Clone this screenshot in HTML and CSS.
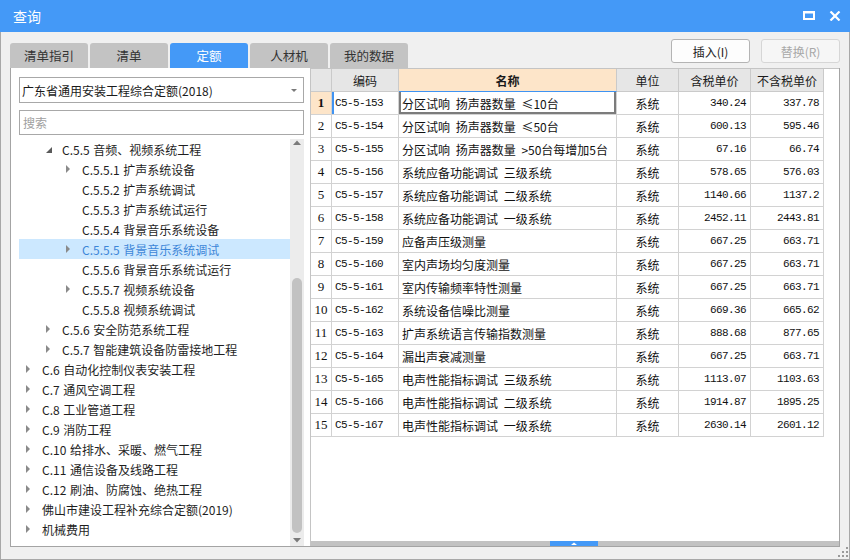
FILE: index.html
```html
<!DOCTYPE html>
<html lang="zh-CN">
<head>
<meta charset="utf-8">
<title>查询</title>
<link rel="stylesheet" href="styles.css">
</head>
<body>
<div class="window">
  <div class="titlebar">
    <span class="title">查询</span>
    <div class="ctrls">
      <svg class="ic" width="12" height="10" viewBox="0 0 12 10"><rect x="1" y="1" width="10" height="7" fill="none" stroke="#fff" stroke-width="2"/><rect x="1" y="1" width="10" height="1.5" fill="#fff"/></svg>
      <svg class="ic" width="12" height="10" viewBox="0 0 12 10"><path d="M1.5 0.5 L10.5 9.5 M10.5 0.5 L1.5 9.5" stroke="#fff" stroke-width="2.2"/></svg>
    </div>
  </div>
  <div class="frame">
    <div class="toprow">
      <div class="tabs">
        <div class="tab">清单指引</div>
        <div class="tab">清单</div>
        <div class="tab active">定额</div>
        <div class="tab">人材机</div>
        <div class="tab">我的数据</div>
      </div>
      <div class="btns">
        <div class="btn">插入(I)</div>
        <div class="btn disabled">替换(R)</div>
      </div>
    </div>
    <div class="main">
      <div class="left">
        <div class="select">广东省通用安装工程综合定额(2018)<span class="caret"></span></div>
        <div class="search">搜索</div>
        <div class="treewrap">
          <div class="tree">
            <div class="row l2"><span class="tg"><svg width="20" height="20" viewBox="0 0 20 20"><path d="M10 8 L10 14 L4 14 Z" fill="#5a5a5a"/></svg></span><span>C.5.5 音频、视频系统工程</span></div>
            <div class="row l3"><span class="tg"><svg width="20" height="20" viewBox="0 0 20 20"><path d="M4 6 L8 10 L4 14 Z" fill="#8a8a8a"/></svg></span><span>C.5.5.1 扩声系统设备</span></div>
            <div class="row l3"><span class="tg"></span><span>C.5.5.2 扩声系统调试</span></div>
            <div class="row l3"><span class="tg"></span><span>C.5.5.3 扩声系统试运行</span></div>
            <div class="row l3"><span class="tg"></span><span>C.5.5.4 背景音乐系统设备</span></div>
            <div class="row l3 sel"><span class="tg"><svg width="20" height="20" viewBox="0 0 20 20"><path d="M4 6 L8 10 L4 14 Z" fill="#8a8a8a"/></svg></span><span>C.5.5.5 背景音乐系统调试</span></div>
            <div class="row l3"><span class="tg"></span><span>C.5.5.6 背景音乐系统试运行</span></div>
            <div class="row l3"><span class="tg"><svg width="20" height="20" viewBox="0 0 20 20"><path d="M4 6 L8 10 L4 14 Z" fill="#8a8a8a"/></svg></span><span>C.5.5.7 视频系统设备</span></div>
            <div class="row l3"><span class="tg"></span><span>C.5.5.8 视频系统调试</span></div>
            <div class="row l2"><span class="tg"><svg width="20" height="20" viewBox="0 0 20 20"><path d="M4 6 L8 10 L4 14 Z" fill="#8a8a8a"/></svg></span><span>C.5.6 安全防范系统工程</span></div>
            <div class="row l2"><span class="tg"><svg width="20" height="20" viewBox="0 0 20 20"><path d="M4 6 L8 10 L4 14 Z" fill="#8a8a8a"/></svg></span><span>C.5.7 智能建筑设备防雷接地工程</span></div>
            <div class="row l1"><span class="tg"><svg width="20" height="20" viewBox="0 0 20 20"><path d="M4 6 L8 10 L4 14 Z" fill="#8a8a8a"/></svg></span><span>C.6 自动化控制仪表安装工程</span></div>
            <div class="row l1"><span class="tg"><svg width="20" height="20" viewBox="0 0 20 20"><path d="M4 6 L8 10 L4 14 Z" fill="#8a8a8a"/></svg></span><span>C.7 通风空调工程</span></div>
            <div class="row l1"><span class="tg"><svg width="20" height="20" viewBox="0 0 20 20"><path d="M4 6 L8 10 L4 14 Z" fill="#8a8a8a"/></svg></span><span>C.8 工业管道工程</span></div>
            <div class="row l1"><span class="tg"><svg width="20" height="20" viewBox="0 0 20 20"><path d="M4 6 L8 10 L4 14 Z" fill="#8a8a8a"/></svg></span><span>C.9 消防工程</span></div>
            <div class="row l1"><span class="tg"><svg width="20" height="20" viewBox="0 0 20 20"><path d="M4 6 L8 10 L4 14 Z" fill="#8a8a8a"/></svg></span><span>C.10 给排水、采暖、燃气工程</span></div>
            <div class="row l1"><span class="tg"><svg width="20" height="20" viewBox="0 0 20 20"><path d="M4 6 L8 10 L4 14 Z" fill="#8a8a8a"/></svg></span><span>C.11 通信设备及线路工程</span></div>
            <div class="row l1"><span class="tg"><svg width="20" height="20" viewBox="0 0 20 20"><path d="M4 6 L8 10 L4 14 Z" fill="#8a8a8a"/></svg></span><span>C.12 刷油、防腐蚀、绝热工程</span></div>
            <div class="row l1"><span class="tg"><svg width="20" height="20" viewBox="0 0 20 20"><path d="M4 6 L8 10 L4 14 Z" fill="#8a8a8a"/></svg></span><span>佛山市建设工程补充综合定额(2019)</span></div>
            <div class="row l1"><span class="tg"><svg width="20" height="20" viewBox="0 0 20 20"><path d="M4 6 L8 10 L4 14 Z" fill="#8a8a8a"/></svg></span><span>机械费用</span></div>
          </div>
          <div class="vscroll">
            <div class="varr"><svg width="14" height="12" viewBox="0 0 14 12"><path d="M3 6 L7 1.5 L11 6 Z" fill="#7a7a7a"/></svg></div>
            <div class="vspace"></div>
            <div class="vthumb"></div>
            <div class="varr down"><svg width="14" height="13" viewBox="0 0 14 13"><path d="M3 5 L11 5 L7 9.5 Z" fill="#7a7a7a"/></svg></div>
          </div>
        </div>
      </div>
      <div class="right">
        <div class="grid">
          <div class="gr head">
            <div class="c"></div>
            <div class="c">编码</div>
            <div class="c hname">名称</div>
            <div class="c">单位</div>
            <div class="c">含税单价</div>
            <div class="c">不含税单价</div>
          </div>
          <div class="gr cur"><div class="c n">1</div><div class="c code">C5-5-153</div><div class="c name">分区试响 扬声器数量 ≤10台</div><div class="c u">系统</div><div class="c p">340.24</div><div class="c p">337.78</div></div>
          <div class="gr"><div class="c n">2</div><div class="c code">C5-5-154</div><div class="c name">分区试响 扬声器数量 ≤50台</div><div class="c u">系统</div><div class="c p">600.13</div><div class="c p">595.46</div></div>
          <div class="gr"><div class="c n">3</div><div class="c code">C5-5-155</div><div class="c name">分区试响 扬声器数量 &gt;50台每增加5台</div><div class="c u">系统</div><div class="c p">67.16</div><div class="c p">66.74</div></div>
          <div class="gr"><div class="c n">4</div><div class="c code">C5-5-156</div><div class="c name">系统应备功能调试 三级系统</div><div class="c u">系统</div><div class="c p">578.65</div><div class="c p">576.03</div></div>
          <div class="gr"><div class="c n">5</div><div class="c code">C5-5-157</div><div class="c name">系统应备功能调试 二级系统</div><div class="c u">系统</div><div class="c p">1140.66</div><div class="c p">1137.2</div></div>
          <div class="gr"><div class="c n">6</div><div class="c code">C5-5-158</div><div class="c name">系统应备功能调试 一级系统</div><div class="c u">系统</div><div class="c p">2452.11</div><div class="c p">2443.81</div></div>
          <div class="gr"><div class="c n">7</div><div class="c code">C5-5-159</div><div class="c name">应备声压级测量</div><div class="c u">系统</div><div class="c p">667.25</div><div class="c p">663.71</div></div>
          <div class="gr"><div class="c n">8</div><div class="c code">C5-5-160</div><div class="c name">室内声场均匀度测量</div><div class="c u">系统</div><div class="c p">667.25</div><div class="c p">663.71</div></div>
          <div class="gr"><div class="c n">9</div><div class="c code">C5-5-161</div><div class="c name">室内传输频率特性测量</div><div class="c u">系统</div><div class="c p">667.25</div><div class="c p">663.71</div></div>
          <div class="gr"><div class="c n">10</div><div class="c code">C5-5-162</div><div class="c name">系统设备信噪比测量</div><div class="c u">系统</div><div class="c p">669.36</div><div class="c p">665.62</div></div>
          <div class="gr"><div class="c n">11</div><div class="c code">C5-5-163</div><div class="c name">扩声系统语言传输指数测量</div><div class="c u">系统</div><div class="c p">888.68</div><div class="c p">877.65</div></div>
          <div class="gr"><div class="c n">12</div><div class="c code">C5-5-164</div><div class="c name">漏出声衰减测量</div><div class="c u">系统</div><div class="c p">667.25</div><div class="c p">663.71</div></div>
          <div class="gr"><div class="c n">13</div><div class="c code">C5-5-165</div><div class="c name">电声性能指标调试 三级系统</div><div class="c u">系统</div><div class="c p">1113.07</div><div class="c p">1103.63</div></div>
          <div class="gr"><div class="c n">14</div><div class="c code">C5-5-166</div><div class="c name">电声性能指标调试 二级系统</div><div class="c u">系统</div><div class="c p">1914.87</div><div class="c p">1895.25</div></div>
          <div class="gr"><div class="c n">15</div><div class="c code">C5-5-167</div><div class="c name">电声性能指标调试 一级系统</div><div class="c u">系统</div><div class="c p">2630.14</div><div class="c p">2601.12</div></div>
        </div>
        <div class="hscroll"><div class="hthumb"><svg width="48" height="5" viewBox="0 0 48 5"><path d="M21 4 L24 1.5 L27 4 Z" fill="#fff"/></svg></div></div>
      </div>
    </div>
    <div class="status">
      <svg width="10" height="10" viewBox="0 0 10 10" fill="#9a9a9a"><rect x="8" y="0" width="2" height="2"/><rect x="4" y="4" width="2" height="2"/><rect x="8" y="4" width="2" height="2"/><rect x="0" y="8" width="2" height="2"/><rect x="4" y="8" width="2" height="2"/><rect x="8" y="8" width="2" height="2"/></svg>
    </div>
  </div>
</div>
</body>
</html>
```
FILE: styles.css
```css
* { box-sizing: border-box; }
html, body { margin: 0; padding: 0; }
body {
  width: 850px;
  height: 560px;
  overflow: hidden;
  font-family: "Noto Sans CJK SC", "Noto Sans", sans-serif;
  font-size: 12px;
  color: #222;
  background: #f0f0f0;
}
.window {
  width: 850px;
  height: 560px;
  display: flex;
  flex-direction: column;
  background: #f0f0f0;
}
.titlebar {
  height: 32px;
  flex: none;
  background: #4499f7;
  display: flex;
  align-items: center;
  justify-content: space-between;
  padding: 0 9px 0 13px;
  color: #fff;
}
.title { font-size: 14px; line-height: 1; }
.ctrls { display: flex; gap: 14px; align-items: center; }
.ic { display: block; }

.frame {
  flex: 1;
  display: flex;
  flex-direction: column;
  border: 1px solid #a8a8a8;
  border-top: none;
}
.toprow {
  height: 36px;
  flex: none;
  display: flex;
  justify-content: space-between;
  padding: 0 9px 0 9px;
}
.tabs { display: flex; gap: 2px; align-self: flex-end; }
.tab {
  width: 78px;
  height: 25px;
  background: #c3c3c3;
  border-radius: 3px 3px 0 0;
  display: flex;
  align-items: center;
  justify-content: center;
  color: #333;
  font-size: 12.5px;
}
.tab.active { background: #4499f7; color: #fff; }
.btns { display: flex; gap: 11px; padding-top: 7px; }
.btn {
  width: 79px;
  height: 24px;
  border: 1px solid #b4b4b4;
  border-radius: 3px;
  background: #fdfdfd;
  display: flex;
  align-items: center;
  justify-content: center;
  color: #222;
}
.btn.disabled { border-color: #d6d6d6; color: #a8a8a8; background: #f6f6f6; }

.main {
  height: 479px;
  flex: none;
  margin: 0 9px;
  background: #fff;
  border: 1px solid #a4a4a4;
  border-top: none;
  display: flex;
}
.left {
  width: 299px;
  flex: none;
  display: flex;
  flex-direction: column;
  padding: 9px 6px 0 8px;
}
.select {
  height: 26px;
  border: 1px solid #a8a8a8;
  display: flex;
  align-items: center;
  padding-left: 2px;
  color: #1a1a1a;
}
.caret {
  margin-left: auto;
  margin-right: 6px;
  width: 0;
  height: 0;
  border-left: 3px solid transparent;
  border-right: 3px solid transparent;
  border-top: 3px solid #7a7a7a;
}
.search {
  height: 25px;
  margin-top: 7px;
  border: 1px solid #a8a8a8;
  display: flex;
  align-items: center;
  padding-left: 3px;
  color: #a0a0a0;
}
.treewrap {
  flex: 1;
  margin-top: 4px;
  display: flex;
}
.tree { flex: 1; }
.row {
  height: 20px;
  display: flex;
  align-items: center;
  white-space: nowrap;
  color: #1e1e1e;
  word-spacing: 1px;
}
.row.l1 { padding-left: 3px; }
.row.l2 { padding-left: 23px; }
.row.l3 { padding-left: 43px; }
.tg { width: 20px; height: 20px; flex: none; }
.tg svg { display: block; }
.row.sel { background: #cce8ff; color: #3c86d8; }

.vscroll {
  width: 14px;
  flex: none;
  background: #ececec;
  display: flex;
  flex-direction: column;
}
.varr { height: 12px; flex: none; }
.varr.down { height: 13px; }
.varr svg { display: block; }
.vspace { height: 127px; flex: none; }
.vthumb {
  flex: 1;
  margin: 0 2px;
  background: #c2c2c2;
  border-radius: 5px;
}

.right {
  flex: 1;
  display: flex;
  flex-direction: column;
  border-left: 1px solid #c4c4c4;
  border-top: 1px solid #c4c4c4;
}
.grid { flex: 1; }
.gr {
  display: grid;
  grid-template-columns: 21px 67px 218px 62px 72px 73px;
  height: 23px;
}
.c {
  border-right: 1px solid #d2d2d2;
  border-bottom: 1px solid #d2d2d2;
  display: flex;
  align-items: center;
  overflow: hidden;
  white-space: nowrap;
  color: #111;
}
.head .c {
  background: #e6e6e6;
  justify-content: center;
  border-color: #cacaca;
  color: #1a1a1a;
}
.head .hname {
  background: #fde5c9;
  font-weight: bold;
  border-bottom-color: #3f93f2;
}
.c.n {
  justify-content: center;
  font-family: "Liberation Serif", serif;
  font-size: 13px;
  background: #fff;
}
.cur .c.n { background: #fde5c9; font-weight: bold; }
.cur .c.code { box-shadow: inset 2px 0 0 #3f93f2; }
.cur .c.name { box-shadow: inset 2px 0 0 #7c7c7c, inset -2px 0 0 #7c7c7c, inset 0 -2px 0 #7c7c7c; }
.c.code {
  padding-left: 3px;
  font-family: "Liberation Mono", monospace;
  font-size: 11px;
  letter-spacing: -0.6px;
}
.c.name { padding-left: 3px; font-size: 12px; word-spacing: 3px; }
.c.u { justify-content: center; }
.c.p {
  justify-content: flex-end;
  padding-right: 4px;
  font-family: "Liberation Mono", monospace;
  font-size: 11px;
  letter-spacing: -0.6px;
}
.hscroll {
  height: 5px;
  flex: none;
  background: #c2c2c2;
  display: flex;
}
.hthumb {
  width: 48px;
  height: 5px;
  margin-left: 239px;
  background: #4499f7;
}
.hthumb svg { display: block; }
.status {
  flex: 1;
  display: flex;
  justify-content: flex-end;
  align-items: flex-start;
  padding: 0 1px 0 0;
}
.status svg { display: block; }
```
